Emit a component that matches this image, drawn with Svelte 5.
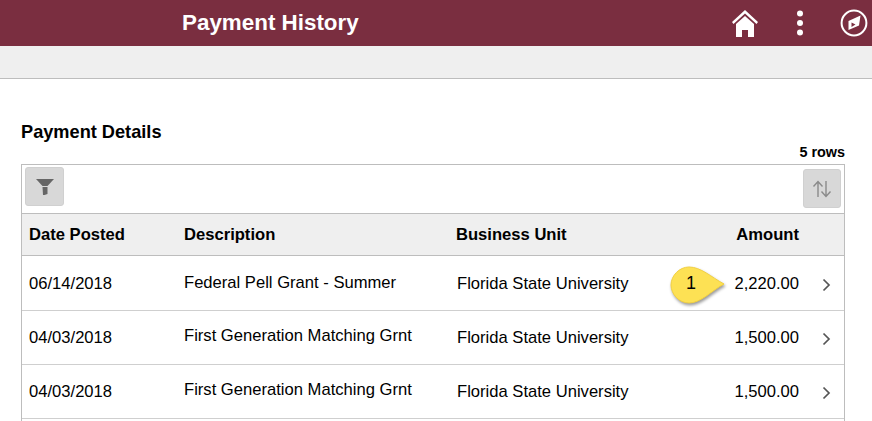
<script>
	const rows = [
		{ date: '06/14/2018', desc: 'Federal Pell Grant - Summer', unit: 'Florida State University', amount: '2,220.00', callout: true },
		{ date: '04/03/2018', desc: 'First Generation Matching Grnt', unit: 'Florida State University', amount: '1,500.00' },
		{ date: '04/03/2018', desc: 'First Generation Matching Grnt', unit: 'Florida State University', amount: '1,500.00' }
	];
</script>

<div class="page">
	<header class="banner">
		<h1>Payment History</h1>
		<div class="actions">
			<svg class="home" width="26" height="27" viewBox="0 0 26 27">
				<path d="M13 0 L0 12 L1.5 14 L13 3.5 L24.5 14 L26 12 Z" fill="#fff" />
				<path d="M13 6 L4 14 V27 H10 V20 H16 V27 H22 V14 Z" fill="#fff" />
			</svg>
			<svg class="dots" width="8" height="26" viewBox="0 0 8 26">
				<circle cx="4" cy="3.5" r="3" fill="#fff" />
				<circle cx="4" cy="13" r="3" fill="#fff" />
				<circle cx="4" cy="22.5" r="3" fill="#fff" />
			</svg>
			<svg class="nav" width="28" height="28" viewBox="0 0 28 28">
				<circle cx="14" cy="14" r="12.4" fill="none" stroke="#fff" stroke-width="2" />
				<path d="M8.5 12 L20.5 6.5 L19 16.5 L8.5 21 Z M11.5 13.5 V18 L15.5 15.5 Z" fill="#fff" fill-rule="evenodd" />
			</svg>
		</div>
	</header>
	<div class="subbar"></div>

	<main class="content">
		<h2>Payment Details</h2>
		<div class="count">5 rows</div>
		<div class="grid">
			<div class="toolbar">
				<button class="tool" aria-label="Filter">
					<svg width="20" height="18" viewBox="0 0 20 18">
						<path d="M1 1 H19 L12.5 8 H7.5 Z" fill="#666" />
						<path d="M7.5 9 H12.5 V16 L9.5 17 H8 Z" fill="#666" />
					</svg>
				</button>
				<button class="tool sort" aria-label="Sort">
					<svg width="20" height="20" viewBox="0 0 20 20">
						<path d="M6 18 V3 M1.5 7.5 L6 2.5 L10.5 7.5 M14 2 V17 M9.5 12.5 L14 17.5 L18.5 12.5" fill="none" stroke="#8a8a8a" stroke-width="1.4" />
					</svg>
				</button>
			</div>
			<div class="row head">
				<div class="date">Date Posted</div>
				<div class="desc">Description</div>
				<div class="unit">Business Unit</div>
				<div class="amount">Amount</div>
				<div class="go"></div>
			</div>
			{#each rows as row, i}
				<div class="row body" class:first={i === 0}>
					<div class="date">{row.date}</div>
					<div class="desc">{row.desc}</div>
					<div class="unit">{row.unit}</div>
					<div class="amount">
						{#if row.callout}
							<svg class="callout" width="60" height="44" viewBox="0 0 60 44">
								<path d="M20 2 C32 2 42 12 55 19 C42 26 32 38 20 38 C10 38 2 29 2 20 C2 11 10 2 20 2 Z" fill="#fde154" stroke="#f2d040" stroke-width="1" />
							</svg>
							<span class="callout-num">1</span>
						{/if}
						{row.amount}
					</div>
					<div class="go">
						<svg width="9" height="14" viewBox="0 0 9 14">
							<path d="M1.5 1.5 L7 7 L1.5 12.5" fill="none" stroke="#555" stroke-width="1.7" />
						</svg>
					</div>
				</div>
			{/each}
			<div class="row body"></div>
		</div>
	</main>
</div>

<style>
	:global(body) {
		margin: 0;
		background: #fff;
	}
	.page {
		height: 421px;
		overflow: hidden;
		font-family: 'Liberation Sans', Arial, sans-serif;
		color: #000;
		font-size: 16.6px;
	}
	.banner {
		height: 46px;
		background: #7a2e40;
		display: flex;
		align-items: center;
		justify-content: space-between;
		padding-left: 182px;
		padding-right: 4px;
	}
	h1 {
		margin: 0;
		color: #fff;
		font-size: 22.4px;
		font-weight: bold;
	}
	.actions {
		display: flex;
		align-items: center;
	}
	.home {
		margin-right: 38px;
	}
	.dots {
		margin-right: 36px;
	}
	.subbar {
		height: 32px;
		background: #efefef;
		border-bottom: 1px solid #bdbdbd;
	}
	.content {
		padding: 43px 27px 0 21px;
	}
	h2 {
		margin: 0;
		font-size: 18.2px;
		line-height: 20px;
		font-weight: bold;
	}
	.count {
		text-align: right;
		font-size: 14.4px;
		font-weight: bold;
		line-height: 16px;
		height: 20px;
		margin-top: 2px;
	}
	.grid {
		border: 1px solid #bdbdbd;
		border-bottom: none;
	}
	.toolbar {
		height: 49px;
		box-sizing: border-box;
		display: flex;
		justify-content: space-between;
		align-items: flex-start;
		padding: 2px 3px 0 3px;
		border-bottom: 1px solid #bdbdbd;
	}
	.tool {
		width: 39px;
		height: 39px;
		padding: 0;
		background: #d8d8d8;
		border: 1px solid #d0d0d0;
		border-radius: 3px;
		display: flex;
		align-items: center;
		justify-content: center;
	}
	.sort {
		width: 38px;
		margin-top: 2px;
	}
	.row {
		display: grid;
		grid-template-columns: 162px 272px 1fr 116px 45px;
		align-items: center;
		box-sizing: border-box;
		height: 54px;
		border-bottom: 1px solid #cfcfcf;
	}
	.head {
		height: 42px;
		background: #efefef;
		font-weight: bold;
		border-bottom-color: #bdbdbd;
	}
	.first {
		height: 55px;
		padding-top: 2px;
	}
	.date {
		padding-left: 7px;
	}
	.body .desc {
		padding-bottom: 3px;
	}
	.body .unit {
		padding-left: 1px;
	}
	.amount {
		position: relative;
		text-align: right;
	}
	.go {
		display: flex;
		justify-content: center;
		padding-top: 2px;
		padding-left: 9px;
	}
	.callout {
		position: absolute;
		left: -14px;
		top: -9px;
		filter: drop-shadow(1px 2px 1.5px rgba(0, 0, 0, 0.4));
	}
	.callout-num {
		position: absolute;
		left: 3px;
		top: -1px;
		font-size: 18px;
	}
</style>
